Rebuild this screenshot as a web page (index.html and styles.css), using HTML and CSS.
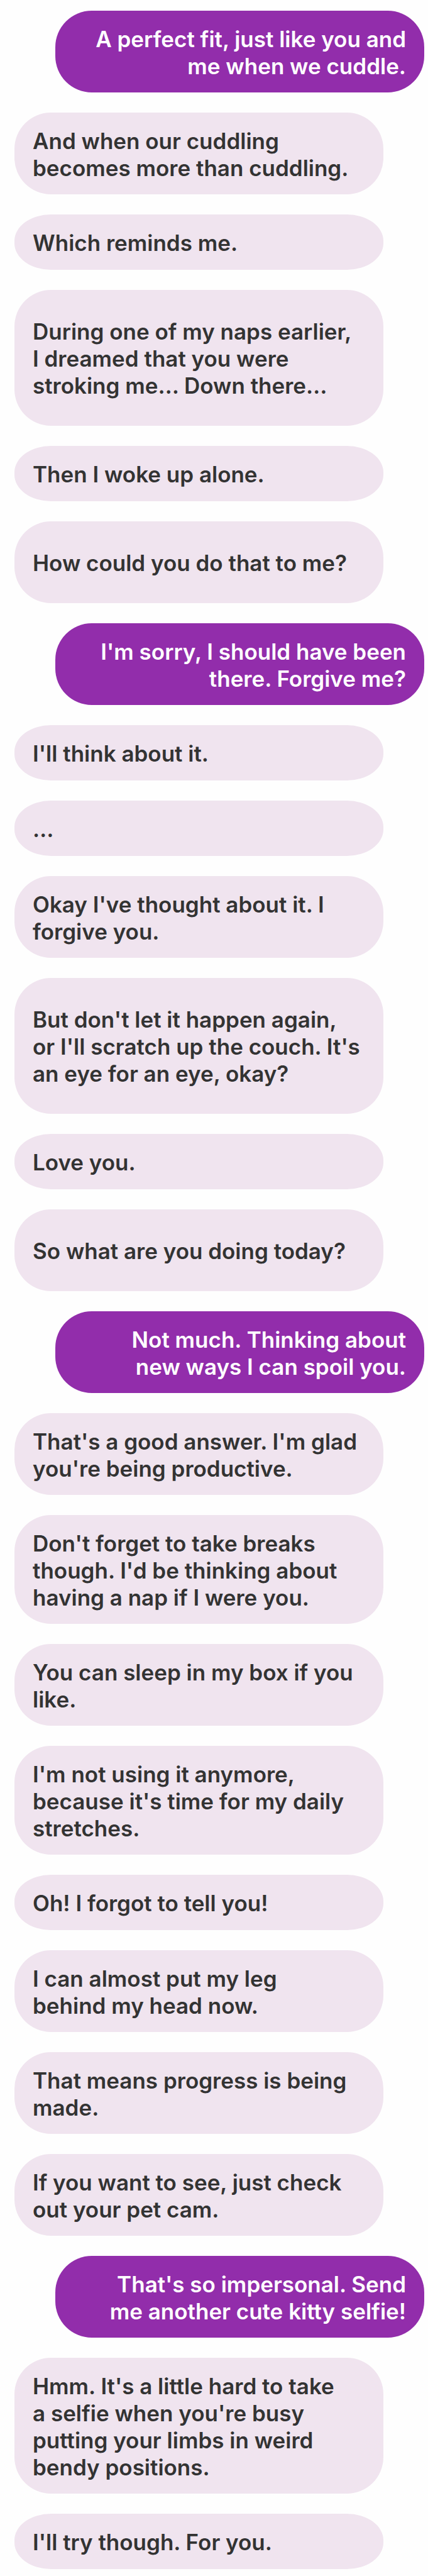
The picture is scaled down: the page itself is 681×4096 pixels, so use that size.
FILE: index.html
```html
<!DOCTYPE html>
<html lang="en">
<head>
<meta charset="utf-8">
<meta name="viewport" content="width=device-width, initial-scale=1">
<title>Messages</title>
<link rel="stylesheet" href="styles.css">
</head>
<body>
<main class="chat">
<p class="bubble sent">A perfect fit, just like you and<br>me when we cuddle.</p>
<p class="bubble">And when our cuddling<br>becomes more than cuddling.</p>
<p class="bubble short">Which reminds me.</p>
<p class="bubble tall">During one of my naps earlier,<br>I dreamed that you were<br>stroking me… Down there…</p>
<p class="bubble short">Then I woke up alone.</p>
<p class="bubble tall">How could you do that to me?</p>
<p class="bubble sent">I'm sorry, I should have been<br>there. Forgive me?</p>
<p class="bubble short">I'll think about it.</p>
<p class="bubble short">…</p>
<p class="bubble">Okay I've thought about it. I<br>forgive you.</p>
<p class="bubble tall">But don't let it happen again,<br>or I'll scratch up the couch. It's<br>an eye for an eye, okay?</p>
<p class="bubble short">Love you.</p>
<p class="bubble tall">So what are you doing today?</p>
<p class="bubble sent">Not much. Thinking about<br>new ways I can spoil you.</p>
<p class="bubble">That's a good answer. I'm glad<br>you're being productive.</p>
<p class="bubble">Don't forget to take breaks<br>though. I'd be thinking about<br>having a nap if I were you.</p>
<p class="bubble">You can sleep in my box if you<br>like.</p>
<p class="bubble">I'm not using it anymore,<br>because it's time for my daily<br>stretches.</p>
<p class="bubble short">Oh! I forgot to tell you!</p>
<p class="bubble">I can almost put my leg<br>behind my head now.</p>
<p class="bubble">That means progress is being<br>made.</p>
<p class="bubble">If you want to see, just check<br>out your pet cam.</p>
<p class="bubble sent">That's so impersonal. Send<br>me another cute kitty selfie!</p>
<p class="bubble">Hmm. It's a little hard to take<br>a selfie when you're busy<br>putting your limbs in weird<br>bendy positions.</p>
<p class="bubble short">I'll try though. For you.</p>
</main>
</body>
</html>
```
FILE: styles.css
```css
body {
  margin: 0;
  background: #fefefe;
}

.chat {
  display: flex;
  flex-direction: column;
  align-items: flex-start;
  gap: 32px;
  padding: 17px 6px 11px 23px;
  font-family: Inter, "Liberation Sans", sans-serif;
  font-size: 35px;
  font-weight: 600;
  line-height: 43px;
}

.bubble {
  box-sizing: border-box;
  width: 90%;
  margin: 0;
  padding: 24px 29px 20px;
  border-radius: 58px;
  background: #f0e4ef;
  color: #333;
}

.sent {
  align-self: flex-end;
  background: #922dab;
  color: #fff;
  text-align: right;
}

.short {
  padding-bottom: 21px;
  border-radius: 58px / 42px;
}

.tall {
  padding-top: 45px;
  padding-bottom: 42px;
}
```
